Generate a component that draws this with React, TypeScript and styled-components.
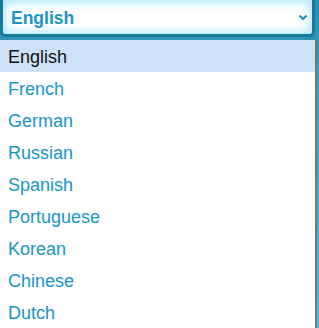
import styled, { createGlobalStyle } from "styled-components";

const GlobalStyle = createGlobalStyle`
  html, body {
    margin: 0;
    padding: 0;
    background: #2a8cb0;
    overflow: hidden;
  }
  body {
    font-family: "Liberation Sans", Arial, sans-serif;
  }
`;

const languages = [
  "English",
  "French",
  "German",
  "Russian",
  "Spanish",
  "Portuguese",
  "Korean",
  "Chinese",
  "Dutch",
];

const App = () => {
  return (
    <>
      <GlobalStyle />
      <Page>
        <Select>
          <Current>English</Current>
          <Chevron width="10" height="7" viewBox="0 0 10 7">
            <path d="M1.5 1.5 L5 5 L8.5 1.5" fill="none" stroke="#1a96c4" strokeWidth="2.2" />
          </Chevron>
        </Select>
        <List>
          {languages.map((lang, i) => (
            <Item key={lang} selected={i === 0}>
              {lang}
            </Item>
          ))}
        </List>
      </Page>
    </>
  );
};

export default App;

const Page = styled.div`
  width: 319px;
  height: 328px;
  display: flex;
  flex-direction: column;
  background: linear-gradient(to bottom, #2a8cb0 0%, #3ea5cb 40%, #58b8dc 100%);
`;

const Select = styled.div`
  width: 315px;
  height: 40px;
  margin-top: -3px;
  box-sizing: border-box;
  border: 3px solid #177a9c;
  border-top-color: #9fdcf0;
  border-radius: 0 0 5px 5px;
  background: #fff;
  box-shadow: inset 0 0 9px 3px #b5e8f8;
  display: flex;
  align-items: center;
  justify-content: space-between;
  padding: 3px 4px 0 8px;
`;

const Current = styled.span`
  font-size: 17.5px;
  font-weight: 700;
  color: #1a96c4;
`;

const Chevron = styled.svg`
  display: block;
  margin-top: -2px;
`;

const List = styled.ul`
  list-style: none;
  margin: 3px 0 0;
  padding: 0;
  width: 317px;
  box-sizing: border-box;
  background: #fff;
  border-right: 2px solid #767676;
  flex: 1;
  overflow: hidden;
`;

const Item = styled.li<{ selected?: boolean }>`
  height: 32px;
  display: flex;
  align-items: center;
  padding: 2px 0 0 8px;
  box-sizing: border-box;
  font-size: 18px;
  color: ${(p) => (p.selected ? "#111" : "#1a96c4")};
  background: ${(p) => (p.selected ? "#cce3f7" : "#fff")};
`;
